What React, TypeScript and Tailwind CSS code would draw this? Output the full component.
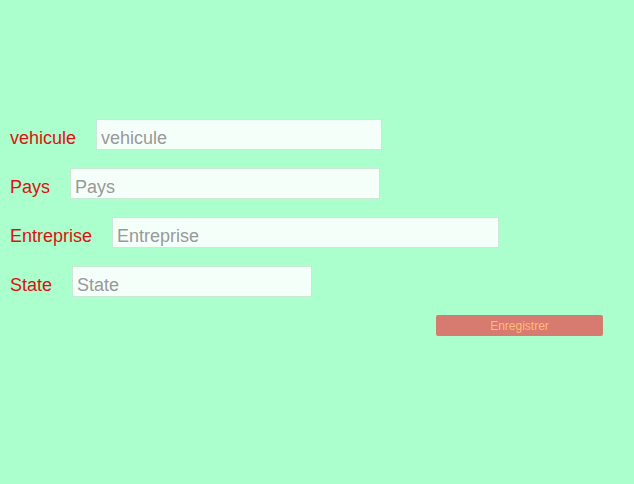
const fields = [
  { label: 'vehicule', width: 'w-[286px]' },
  { label: 'Pays', width: 'w-[310px]' },
  { label: 'Entreprise', width: 'w-[387px]' },
  { label: 'State', width: 'w-[240px]' },
];

export default function App() {
  return (
    <main className="min-h-screen w-full bg-[#aaffcc] pt-[119px] pl-[10px] font-['Liberation_Sans',Arial,sans-serif]">
      <form className="flex flex-col gap-[18px]" onSubmit={(e) => e.preventDefault()}>
        {fields.map((f) => (
          <div key={f.label} className="flex items-start">
            <label className="mr-5 mt-[10px] text-[18px] leading-none text-[#dd1111]">{f.label}</label>
            <input
              type="text"
              placeholder={f.label}
              className={`${f.width} h-[31px] border border-[#c9e9d4] bg-[#f5fffa] px-1 pt-[7px] pb-0 text-[18px] text-gray-700 placeholder:text-[#999999] outline-none`}
            />
          </div>
        ))}
        <div className="flex">
          <button
            type="submit"
            className="ml-[426px] h-[21px] w-[167px] rounded-[2px] bg-[#d77a6f] text-[12px] leading-none text-[#ffbb77]"
          >
            Enregistrer
          </button>
        </div>
      </form>
    </main>
  );
}
